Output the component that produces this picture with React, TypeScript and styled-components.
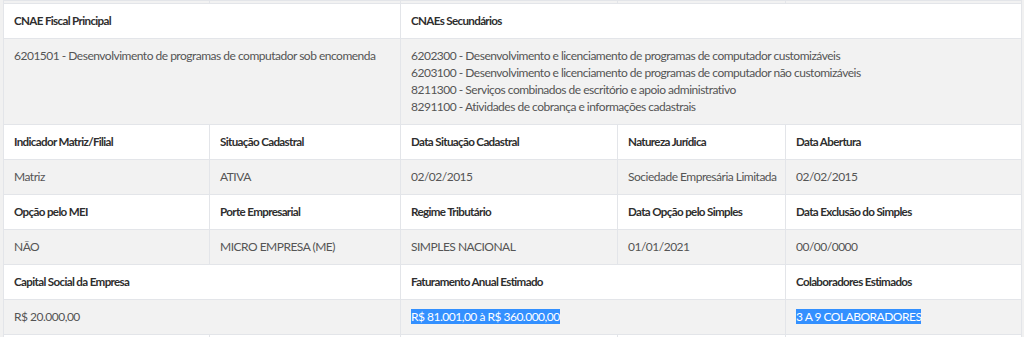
import React from 'react';
import styled, { createGlobalStyle } from 'styled-components';

const GlobalStyle = createGlobalStyle`
  html, body {
    margin: 0;
    padding: 0;
    background: #f1f1f1;
  }
  body {
    font-family: Lato, 'Liberation Sans', sans-serif;
    font-size: 12px;
    color: #555;
  }
`;

const Wrapper = styled.div`
  padding: 0 2px 0 3px;
  overflow: hidden;
  height: 337px;
`;

const Table = styled.table`
  width: 100%;
  border-collapse: collapse;
  table-layout: fixed;
  border-left: 1px solid #e3e5e9;
  border-right: 1px solid #e3e5e9;
`;

const Row = styled.tr<{ $head?: boolean }>`
  background: ${(p) => (p.$head ? '#fff' : '#f2f2f2')};
`;

const Cell = styled.td<{ $head?: boolean }>`
  border: 1px solid #e3e5e9;
  padding: 8px 10px 9px;
  line-height: 17px;
  vertical-align: top;
  text-align: left;
  font-size: ${(p) => (p.$head ? '11.6px' : '12px')};
  letter-spacing: ${(p) => (p.$head ? '-0.65px' : '-0.5px')};
  font-weight: ${(p) => (p.$head ? 700 : 400)};
  color: ${(p) => (p.$head ? '#2e2e2e' : '#555')};
  white-space: nowrap;
`;

const Stub = styled.td<{ $head?: boolean }>`
  border: 1px solid #e3e5e9;
  padding: 0;
  height: ${(p) => (p.$head ? '30px' : '2px')};
`;

const Line = styled.div`
  display: block;
`;

const Picked = styled.span`
  background: #3390ff;
  color: #fff;
`;

const secundarios = [
  '6202300 - Desenvolvimento e licenciamento de programas de computador customizáveis',
  '6203100 - Desenvolvimento e licenciamento de programas de computador não customizáveis',
  '8211300 - Serviços combinados de escritório e apoio administrativo',
  '8291100 - Atividades de cobrança e informações cadastrais',
];

const StubRow = ({ head }: { head?: boolean }) => (
  <Row $head={head}>
    {[0, 1, 2, 3, 4].map((i) => (
      <Stub key={i} $head={head} />
    ))}
  </Row>
);

const App = () => {
  return (
    <>
      <GlobalStyle />
      <Wrapper>
        <Table>
          <colgroup>
            <col style={{ width: 206 }} />
            <col style={{ width: 191 }} />
            <col style={{ width: 217 }} />
            <col style={{ width: 168 }} />
            <col />
          </colgroup>
          <tbody>
            <StubRow />
            <Row $head>
              <Cell $head colSpan={2}>CNAE Fiscal Principal</Cell>
              <Cell $head colSpan={3}>CNAEs Secundários</Cell>
            </Row>
            <Row>
              <Cell colSpan={2}>6201501 - Desenvolvimento de programas de computador sob encomenda</Cell>
              <Cell colSpan={3}>
                {secundarios.map((s) => (
                  <Line key={s}>{s}</Line>
                ))}
              </Cell>
            </Row>
            <Row $head>
              <Cell $head>Indicador Matriz/Filial</Cell>
              <Cell $head>Situação Cadastral</Cell>
              <Cell $head>Data Situação Cadastral</Cell>
              <Cell $head>Natureza Jurídica</Cell>
              <Cell $head>Data Abertura</Cell>
            </Row>
            <Row>
              <Cell>Matriz</Cell>
              <Cell>ATIVA</Cell>
              <Cell>02/02/2015</Cell>
              <Cell>Sociedade Empresária Limitada</Cell>
              <Cell>02/02/2015</Cell>
            </Row>
            <Row $head>
              <Cell $head>Opção pelo MEI</Cell>
              <Cell $head>Porte Empresarial</Cell>
              <Cell $head>Regime Tributário</Cell>
              <Cell $head>Data Opção pelo Simples</Cell>
              <Cell $head>Data Exclusão do Simples</Cell>
            </Row>
            <Row>
              <Cell>NÃO</Cell>
              <Cell>MICRO EMPRESA (ME)</Cell>
              <Cell>SIMPLES NACIONAL</Cell>
              <Cell>01/01/2021</Cell>
              <Cell>00/00/0000</Cell>
            </Row>
            <Row $head>
              <Cell $head colSpan={2}>Capital Social da Empresa</Cell>
              <Cell $head colSpan={2}>Faturamento Anual Estimado</Cell>
              <Cell $head>Colaboradores Estimados</Cell>
            </Row>
            <Row>
              <Cell colSpan={2}>R$ 20.000,00</Cell>
              <Cell colSpan={2}>
                <Picked>R$ 81.001,00 à R$ 360.000,00</Picked>
              </Cell>
              <Cell>
                <Picked>3 A 9 COLABORADORES</Picked>
              </Cell>
            </Row>
            <StubRow head />
          </tbody>
        </Table>
      </Wrapper>
    </>
  );
};

export default App;
